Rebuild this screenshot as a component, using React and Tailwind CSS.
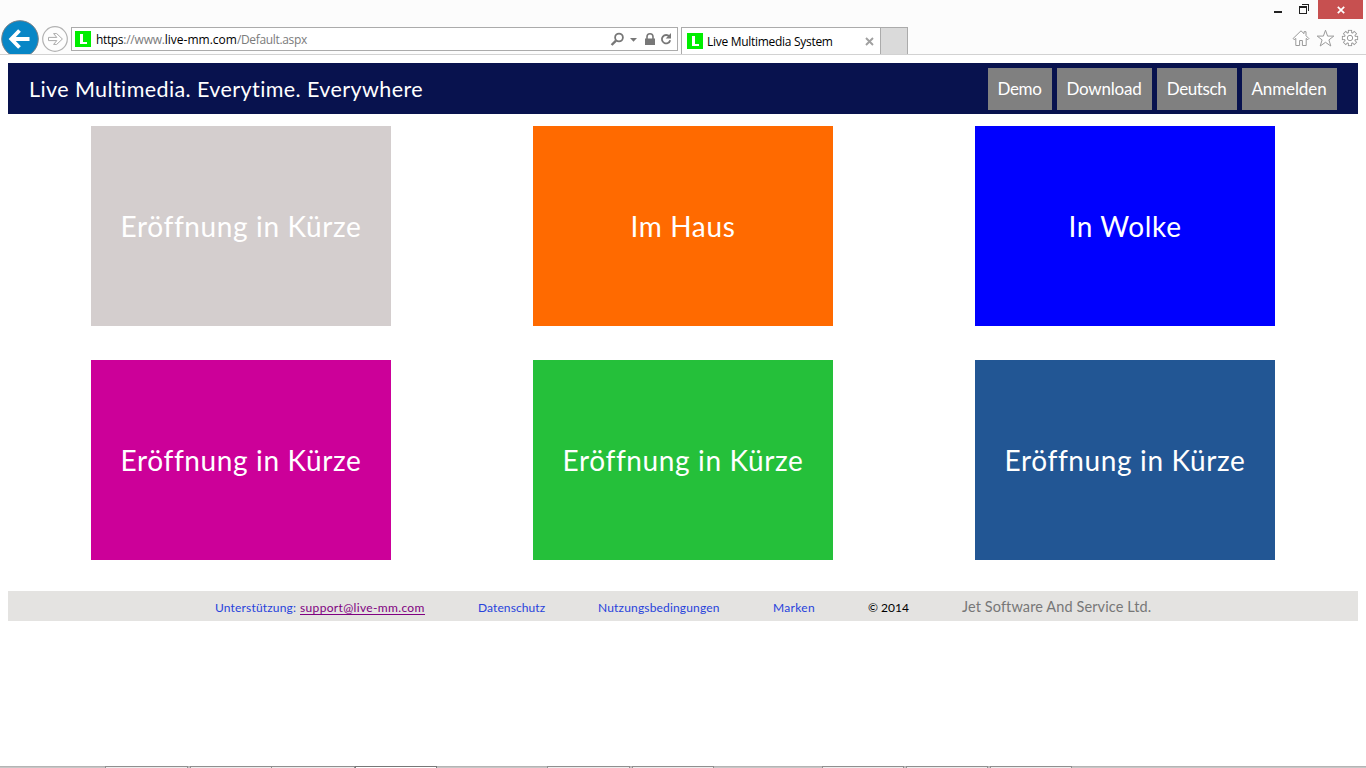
import React from 'react';

function Favicon() {
  return (
    <svg width="16" height="16" viewBox="0 0 16 16" className="shrink-0" shapeRendering="crispEdges">
      <rect width="16" height="16" fill="#00ee00" />
      <path d="M5 3h3v8h4v2H5z" fill="#fff" />
    </svg>
  );
}

function WindowControls() {
  return (
    <div className="flex h-[19px] justify-end pr-[3px]">
      <svg width="44" height="19" viewBox="0 0 44 19" shapeRendering="crispEdges">
        <rect y="11" width="8" height="2" fill="#222" />
        <path d="M28 4.5h6.5V11M25.5 6.5h7v7h-7z" fill="none" stroke="#222" />
        <rect x="25" y="6" width="8" height="2" fill="#222" />
      </svg>
      <div className="flex w-[45px] items-center justify-center bg-[#c75050]">
        <svg width="8" height="8" viewBox="0 0 8 8">
          <path d="M.8.8l6.4 6.4M7.2.8L.8 7.2" stroke="#fff" strokeWidth="1.7" />
        </svg>
      </div>
    </div>
  );
}

function NavButtons() {
  return (
    <svg width="71" height="35" viewBox="0 19 71 35" className="shrink-0">
      <circle cx="20" cy="39" r="18.3" fill="#0786c6" stroke="#777f85" strokeWidth="1" />
      <path d="M29.5 39H12M19.5 30.5L11.3 39l8.2 8.5" fill="none" stroke="#fff" strokeWidth="3.8" />
      <circle cx="55" cy="39" r="12.3" fill="#fdfdfd" stroke="#b2b2b2" strokeWidth="1.2" />
      <path d="M48.5 37.4h8.3L53.6 33.6h3.1l5.7 5.4-5.7 5.4h-3.1l3.2-3.8h-8.3z" fill="#fff" stroke="#aaa" strokeWidth="1" />
    </svg>
  );
}

function AddressBar() {
  return (
    <div className="mt-2 flex h-6 w-[607px] shrink-0 items-center border border-[#ababab] bg-white pl-[3px] text-[12px] text-[#7b7b7b]">
      <Favicon />
      <div className="ml-[5px] flex flex-1 whitespace-pre pt-0.5">
        <span className="tracking-[-0.36px] text-black">https</span>
        <span className="tracking-[-0.2px]">://www.</span>
        <span className="text-black">live-mm.com</span>
        <span className="tracking-[-0.34px]">/Default.aspx</span>
      </div>
      <svg width="68" height="22" viewBox="609 28 68 22" fill="none" stroke="#777">
        <circle cx="619" cy="37.5" r="3.9" strokeWidth="1.8" />
        <path d="M616 40.6l-4.4 4.4" strokeWidth="2.4" />
        <path d="M630 38h7l-3.5 3.7z" fill="#777" stroke="none" />
        <path d="M645 38.5h10V45h-10z" fill="#777" stroke="none" />
        <path d="M647 39v-2.2a3 3 0 0 1 6 0V39" strokeWidth="1.6" />
        <path d="M669.4 36.6a4.2 4.2 0 1 0 .8 3.6" strokeWidth="1.8" />
        <path d="M671 33v5.5h-5.3z" fill="#777" stroke="none" />
      </svg>
    </div>
  );
}

function BrowserTabs() {
  return (
    <div className="ml-[3px] mt-2 flex h-[27px] w-[227px] shrink-0">
      <div className="flex w-[200px] items-center border border-b-0 border-[#ababab] bg-white pl-[5px] pr-[6px]">
        <Favicon />
        <span className="ml-1 flex-1 whitespace-nowrap pt-0.5 text-[12px] tracking-[-0.29px] text-black">Live Multimedia System</span>
        <svg width="9" height="9" viewBox="0 0 9 9">
          <path d="M1 1l7 7M8 1L1 8" stroke="#a0a0a0" strokeWidth="1.9" />
        </svg>
      </div>
      <div className="w-[27px] border border-b-0 border-l-0 border-[#ababab] bg-[#dadada]" />
    </div>
  );
}

const gearTeeth = [0, 45, 90, 135, 180, 225, 270, 315];

function ToolIcons() {
  return (
    <svg width="74" height="35" viewBox="1292 19 74 35" className="ml-auto shrink-0" fill="#fff" stroke="#9a9a9a" strokeWidth="1">
      <path d="M1293 38.6l8-7.8 3 2.9v-2h2v4l2.9 2.9-1.1 1.1-1.6-1.3v7.1h-3.8v-5h-2.8v5h-3.8v-7.1l-1.7 1.3z" />
      <path d="M1325.5 30.2l2.1 5.9h6.2l-4.9 3.8 1.9 6.1-5.3-3.7-5.3 3.7 1.9-6.1-4.9-3.8h6.2z" />
      <g transform="translate(1350 38)">
        {gearTeeth.map((a) => (
          <rect key={a} x="-1.6" y="-7.6" width="3.2" height="4" transform={`rotate(${a})`} />
        ))}
        <circle r="5.6" />
        {gearTeeth.map((a) => (
          <rect key={a} x="-1.1" y="-7.1" width="2.2" height="3.5" stroke="none" transform={`rotate(${a})`} />
        ))}
        <circle r="2.7" />
      </g>
    </svg>
  );
}

const tiles = [
  ['Eröffnung in Kürze', 'bg-[#d4cece]'],
  ['Im Haus', 'bg-[#ff6a00]'],
  ['In Wolke', 'bg-[#0000ff]'],
  ['Eröffnung in Kürze', 'bg-[#cc0099]'],
  ['Eröffnung in Kürze', 'bg-[#25c03a]'],
  ['Eröffnung in Kürze', 'bg-[#225694]'],
];

const navItems = [
  ['Demo', 'w-16 tracking-[-0.3px]'],
  ['Download', 'w-[95px] tracking-[-0.2px]'],
  ['Deutsch', 'w-20 tracking-[-0.4px]'],
  ['Anmelden', 'w-[95px] tracking-[-0.1px]'],
];

const idle = 'bg-[#c6c6c6] border-[#b4b4b4]';
const open = 'bg-[#ececec] border-[#8f8f8f] border-x';
const taskbar = [
  `w-[105px] ${idle}`,
  `w-[83px] ${open}`,
  `w-[2px] ${idle}`,
  `w-[82px] ${open}`,
  `w-[83px] ${open} border-l-0`,
  'w-[82px] bg-white border-x border-[#777]',
  `w-[110px] ${idle}`,
  `w-[83px] ${open}`,
  `w-[2px] ${idle}`,
  `w-[82px] ${open}`,
  `w-[108px] ${idle}`,
  `w-[82px] ${open}`,
  `w-[2px] ${idle}`,
  `w-[82px] ${open}`,
  `w-[2px] ${idle}`,
  `w-[82px] ${open}`,
  `flex-1 ${idle}`,
];

export default function App() {
  return (
    <div className="flex h-[768px] w-[1366px] flex-col overflow-hidden bg-white font-['Lato',sans-serif]">
      <div className="h-[55px] shrink-0 border-b border-[#d2d2d2] bg-[#fcfcfc] font-['Open_Sans',sans-serif]">
        <WindowControls />
        <div className="flex h-[35px]">
          <NavButtons />
          <AddressBar />
          <BrowserTabs />
          <ToolIcons />
        </div>
      </div>

      <header className="mx-2 mt-2 flex h-[51px] shrink-0 items-center justify-between bg-[#08124e] px-[21px] text-white">
        <h1 className="whitespace-nowrap pt-0.5 text-[21.5px] tracking-[0.41px]">Live Multimedia. Everytime. Everywhere</h1>
        <nav className="mt-px flex gap-[5px]">
          {navItems.map(([label, style]) => (
            <button key={label} className={`h-[42px] bg-[#808080] pr-px text-[17px] ${style}`}>{label}</button>
          ))}
        </nav>
      </header>

      <main className="mt-3 grid shrink-0 grid-cols-[repeat(3,300px)] gap-x-[142px] gap-y-[34px] pl-[91px]">
        {tiles.map(([label, color], i) => (
          <div key={i} className={`flex h-[200px] items-center justify-center whitespace-nowrap pb-px text-[28px] tracking-[0.63px] text-white ${color}`}>
            {label}
          </div>
        ))}
      </main>

      <footer className="mx-2 mt-[31px] flex h-[30px] shrink-0 items-center whitespace-nowrap bg-[#e4e3e1] pl-[207px] pt-1 text-[12px] text-[#2742dc]">
        <span className="w-[85px] tracking-[0.17px]">Unterstützung:</span>
        <a className="w-[125px] border-b border-[#800080] leading-[13px] tracking-[0.34px] text-[#800080]">support@live-mm.com</a>
        <a className="ml-[53px] w-[67px] tracking-[0.1px]">Datenschutz</a>
        <a className="ml-[53px] w-[122px] tracking-[0.17px]">Nutzungsbedingungen</a>
        <a className="ml-[53px] w-[42px] tracking-[0.3px]">Marken</a>
        <span className="ml-[53px] w-[41px] text-black">© 2014</span>
        <span className="-mt-0.5 ml-[53px] text-[14.5px] tracking-[0.11px] text-[#777]">Jet Software And Service Ltd.</span>
      </footer>

      <div className="mt-auto flex h-[2px] shrink-0">
        {taskbar.map((style, i) => (
          <div key={i} className={`border-t ${style}`} />
        ))}
      </div>
    </div>
  );
}
